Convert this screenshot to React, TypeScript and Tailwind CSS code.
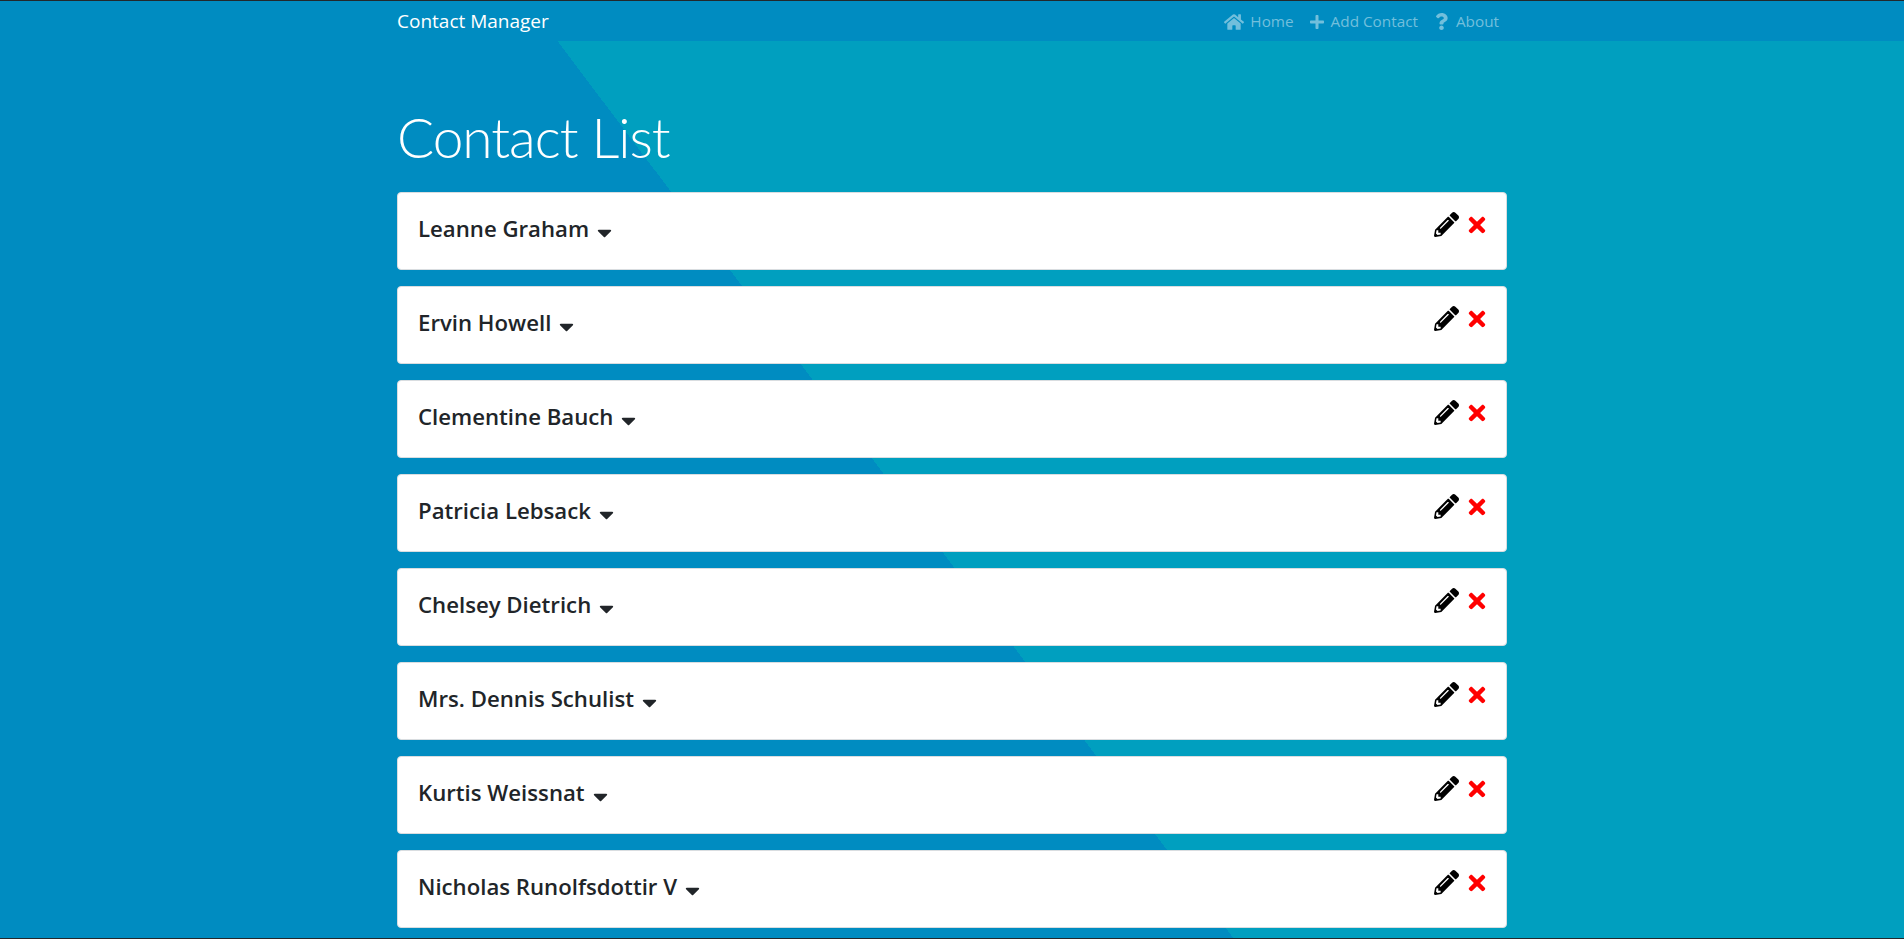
import React from 'react';
import { FaHome, FaPlus, FaQuestion, FaPencilAlt, FaTimes, FaCaretDown } from 'react-icons/fa';

const contacts = [
  'Leanne Graham',
  'Ervin Howell',
  'Clementine Bauch',
  'Patricia Lebsack',
  'Chelsey Dietrich',
  'Mrs. Dennis Schulist',
  'Kurtis Weissnat',
  'Nicholas Runolfsdottir V',
];

const ContactCard: React.FC<{ name: string }> = ({ name }) => (
  <div className="shrink-0 h-[78px] mb-4 bg-white border border-[#d9dde0] rounded-[4px] pl-[20px] pr-[17px] pt-[20px] flex justify-between">
    <h4 className="mt-[1px] text-[22.2px] leading-[30px] font-semibold text-[#212529] flex items-start">
      {name}
      <FaCaretDown className="ml-[4px] mt-[7px] text-[#212529] text-[23px]" />
    </h4>
    <div className="flex items-start gap-[6px] -mt-[1px]">
      <FaPencilAlt className="text-black text-[25px]" />
      <FaTimes className="text-[#ff0000] text-[24px] mt-[1px]" />
    </div>
  </div>
);

const NavLink: React.FC<{ icon: React.ReactNode; label: string }> = ({ icon, label }) => (
  <a className="flex items-center gap-[6px] text-[15.3px] text-[#72bfdc]">
    {icon}
    {label}
  </a>
);

export default function App() {
  return (
    <div className="h-[939px] overflow-hidden border-y border-[#22282c] bg-[linear-gradient(53deg,#008cc1_985px,#009fbf_985px)] font-['Open_Sans','Noto_Sans',sans-serif]">
      <nav className="h-[40px] bg-[#008cc1]">
        <div className="w-[1110px] mx-auto h-full pt-[1px] flex items-center justify-between">
          <span className="text-[19px] text-white">Contact Manager</span>
          <div className="flex items-center gap-[15px] pr-[8px]">
            <NavLink icon={<FaHome className="text-[20px]" />} label="Home" />
            <NavLink icon={<FaPlus className="text-[16px]" />} label="Add Contact" />
            <NavLink icon={<FaQuestion className="text-[17px]" />} label="About" />
          </div>
        </div>
      </nav>
      <main className="w-[1110px] mx-auto">
        <h1 className="mt-[58px] mb-[17px] h-[76px] text-[55px] leading-[76px] tracking-[-1px] font-light font-['Lato','Open_Sans',sans-serif] text-white">Contact List</h1>
        {contacts.map(name => (
          <ContactCard key={name} name={name} />
        ))}
      </main>
    </div>
  );
}
